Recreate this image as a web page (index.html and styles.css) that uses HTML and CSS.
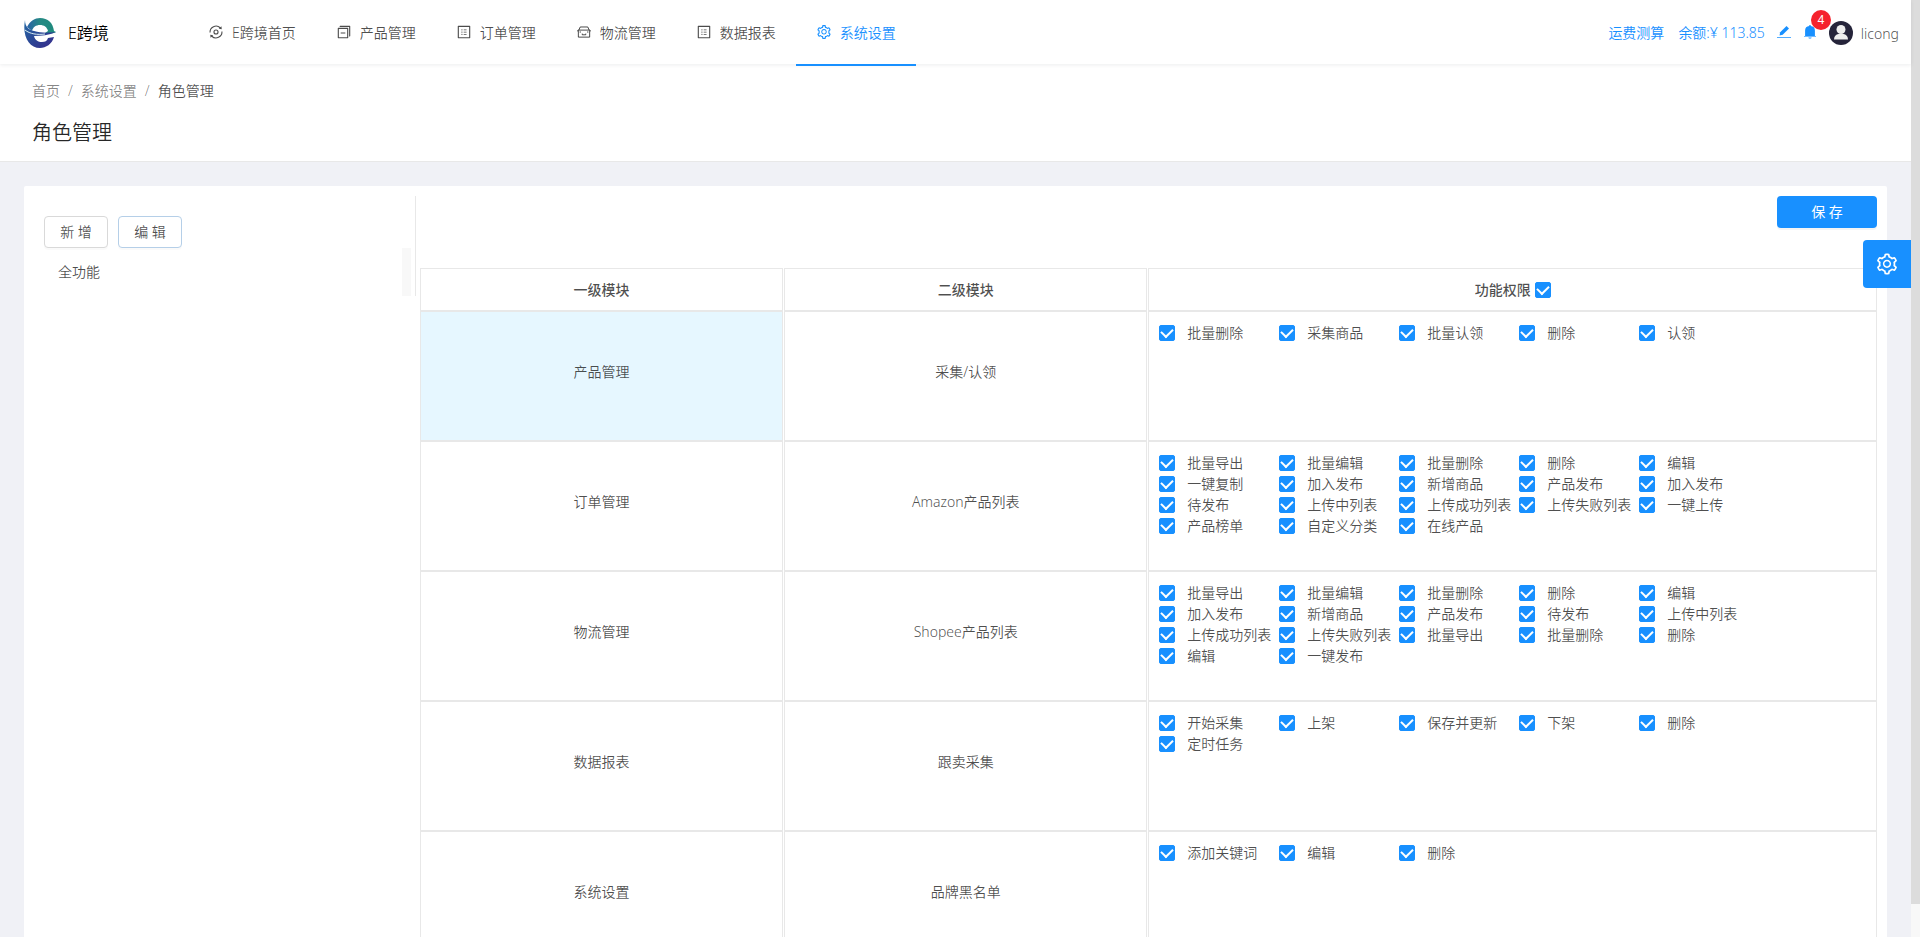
FILE: index.html
```html
<!DOCTYPE html>
<html lang="zh-CN">
<head>
<meta charset="utf-8">
<title>角色管理</title>
<link rel="stylesheet" href="styles.css">
</head>
<body>
<svg class="sprite" aria-hidden="true">
  <symbol id="i-setting" viewBox="0 0 1024 1024"><path d="M924.8 625.7l-65.5-56c3.1-19 4.7-38.4 4.7-57.8s-1.6-38.8-4.7-57.8l65.5-56a32.03 32.03 0 0 0 9.3-35.2l-.9-2.6a443.74 443.74 0 0 0-79.7-137.9l-1.8-2.1a32.12 32.12 0 0 0-35.1-9.5l-81.3 28.9c-30-24.6-63.5-44-99.7-57.6l-15.7-85a32.05 32.05 0 0 0-25.8-25.7l-2.7-.5c-52.1-9.4-106.9-9.4-159 0l-2.7.5a32.05 32.05 0 0 0-25.8 25.7l-15.8 85.4a351.86 351.86 0 0 0-99 57.4l-81.9-29.1a32 32 0 0 0-35.1 9.5l-1.8 2.1a446.02 446.02 0 0 0-79.7 137.9l-.9 2.6c-4.5 12.5-.8 26.5 9.3 35.2l66.3 56.6c-3.1 18.8-4.6 38-4.6 57.1 0 19.2 1.5 38.4 4.6 57.1L99 625.5a32.03 32.03 0 0 0-9.3 35.2l.9 2.6c18.1 50.4 44.9 96.9 79.7 137.9l1.8 2.1a32.12 32.12 0 0 0 35.1 9.5l81.9-29.1c29.8 24.5 63.1 43.9 99 57.4l15.8 85.4a32.05 32.05 0 0 0 25.8 25.7l2.7.5a449.4 449.4 0 0 0 159 0l2.7-.5a32.05 32.05 0 0 0 25.8-25.7l15.7-85a350 350 0 0 0 99.7-57.6l81.3 28.9a32 32 0 0 0 35.1-9.5l1.8-2.1c34.8-41.1 61.6-87.5 79.7-137.9l.9-2.6c4.5-12.3.8-26.3-9.3-35zM788.3 465.9c2.5 15.1 3.8 30.6 3.8 46.1s-1.3 31-3.8 46.1l-6.6 40.1 74.7 63.9a370.03 370.03 0 0 1-42.6 73.6L721 702.8l-31.4 25.8c-23.9 19.6-50.5 35-79.3 45.8l-38.1 14.3-17.9 97a377.5 377.5 0 0 1-85 0l-17.9-97.2-37.8-14.5c-28.5-10.8-55-26.2-78.7-45.7l-31.4-25.9-93.4 33.2c-17-22.9-31.2-47.6-42.6-73.6l75.5-64.5-6.5-40c-2.4-14.9-3.7-30.3-3.7-45.5 0-15.3 1.2-30.6 3.7-45.5l6.5-40-75.5-64.5c11.3-26.1 25.6-50.7 42.6-73.6l93.4 33.2 31.4-25.9c23.7-19.5 50.2-34.9 78.7-45.7l37.9-14.3 17.9-97.2c28.1-3.2 56.8-3.2 85 0l17.9 97 38.1 14.3c28.7 10.8 55.4 26.2 79.3 45.8l31.4 25.8 92.8-32.9c17 22.9 31.2 47.6 42.6 73.6L781.8 426l6.5 39.9zM512 326c-97.2 0-176 78.8-176 176s78.8 176 176 176 176-78.8 176-176-78.8-176-176-176zm79.2 255.2A111.6 111.6 0 0 1 512 614c-29.9 0-58-11.7-79.2-32.8A111.6 111.6 0 0 1 400 502c0-29.9 11.7-58 32.8-79.2C454 401.6 482.1 390 512 390c29.9 0 58 11.6 79.2 32.8A111.6 111.6 0 0 1 624 502c0 29.9-11.7 58-32.8 79.2z"/></symbol>
  <symbol id="i-switcher" viewBox="0 0 1024 1024"><path d="M752 240H144c-17.7 0-32 14.3-32 32v608c0 17.7 14.3 32 32 32h608c17.7 0 32-14.3 32-32V272c0-17.7-14.3-32-32-32zm-40 600H184V312h528v528zm168-728H264c-17.7 0-32 14.3-32 32v32c0 4.4 3.6 8 8 8h600v600c0 4.4 3.6 8 8 8h32c17.7 0 32-14.3 32-32V144c0-17.7-14.3-32-32-32zM300 612h296v-72H300z"/></symbol>
  <symbol id="i-profile" viewBox="0 0 1024 1024"><path d="M880 112H144c-17.7 0-32 14.3-32 32v736c0 17.7 14.3 32 32 32h736c17.700 0 32-14.3 32-32V144c0-17.700-14.3-32-32-32zm-40 728H184V184h656v656zM492 400h184v-56H492v56zm0 144h184v-56H492v56zm0 144h184v-56H492v56zM340 368a40 40 0 1 0 80 0 40 40 0 1 0-80 0zm0 144a40 40 0 1 0 80 0 40 40 0 1 0-80 0zm0 144a40 40 0 1 0 80 0 40 40 0 1 0-80 0z"/></symbol>
  <symbol id="i-car" viewBox="0 0 1024 1024"><g fill="none" stroke="currentColor" stroke-width="64" stroke-linejoin="round" stroke-linecap="round"><path d="M90 440l90-50 90-200h484l90 200 90 50M190 390h644M150 450v390h724V450M400 640v50h224v-50"/></g><path d="M230 480h90v64H230zM704 480h90v64H704z"/></symbol>
  <symbol id="i-home" viewBox="0 0 1024 1024"><g fill="none" stroke="currentColor" stroke-width="70"><circle cx="512" cy="512" r="130"/><path d="M130 540A385 385 0 0 1 780 240M894 484A385 385 0 0 1 244 784"/></g><path d="M690 300l190 40-20-200zM334 724l-190-40 20 200z"/></symbol>
  <symbol id="i-edit" viewBox="0 0 14 14"><path d="M2.500 10.500l.7-3.200L9.500 1l2.500 2.500-6.300 6.300z"/><path d="M0 12h14v1H0z" opacity=".75"/></symbol>
  <symbol id="i-bell" viewBox="0 0 14 14"><path d="M6.300 0h1.400v1a4.500 4.500 0 0 1 4.200 4.500V11H2.100V5.500A4.500 4.500 0 0 1 6.300 1z"/><path d="M1 11h12v1H1zM5.300 12.300h3.400a1.700 1.700 0 0 1-3.400 0z" opacity=".6"/></symbol>
</svg>
<div class="window">
<div class="page">
  <header class="topbar">
    <a class="brand" href="#">
      <svg class="logo" viewBox="0 -1 32 32" role="img" aria-label="E跨境">
        <defs>
          <linearGradient id="g1" x1="0" y1="0" x2="1" y2="0"><stop offset="0" stop-color="#2b62a8"/><stop offset=".45" stop-color="#258a84"/><stop offset="1" stop-color="#1e8a7c"/></linearGradient>
          <linearGradient id="g2" x1="0" y1="0" x2="1" y2="1"><stop offset="0" stop-color="#256aa6"/><stop offset=".6" stop-color="#2d3f92"/><stop offset="1" stop-color="#3a2d8c"/></linearGradient>
        </defs>
        <path fill="url(#g1)" d="M3 9C6 3 11 0 16 0c8 0 13 5 14 13l2 1c-3 2-8 2-11 1l3-2c-1-4-4-6-8-6s-7 2-8 6z"/>
        <path fill="url(#g2)" d="M1 2c0 7 4 10 9 11 7 2 13 2 22 1-7 3-15 4-22 4 1 4 4 6 8 6 3 0 5-1 6-4l6-1c-2 7-8 11-14 11C5 30-2 18 1 2z"/>
        <path fill="none" stroke="#d9eef2" stroke-width="1" d="M1 12c5 4 12 5 20 4"/>
      </svg>
      <span>E跨境</span>
    </a>
    <nav class="menu">
      <a href="#"><svg class="icon"><use href="#i-home"/></svg>E跨境首页</a>
      <a href="#"><svg class="icon"><use href="#i-switcher"/></svg>产品管理</a>
      <a href="#"><svg class="icon"><use href="#i-profile"/></svg>订单管理</a>
      <a href="#"><svg class="icon"><use href="#i-car"/></svg>物流管理</a>
      <a href="#"><svg class="icon"><use href="#i-profile"/></svg>数据报表</a>
      <a href="#" class="active"><svg class="icon"><use href="#i-setting"/></svg>系统设置</a>
    </nav>
    <div class="tools">
      <a href="#">运费测算</a>
      <a href="#" class="balance">余额:¥ 113.85</a>
      <a href="#" aria-label="编辑"><svg class="icon"><use href="#i-edit"/></svg></a>
      <a href="#" class="bell" aria-label="通知"><svg class="icon"><use href="#i-bell"/></svg><span class="badge">4</span></a>
      <a href="#" class="user">
        <svg class="avatar" viewBox="0 0 24 24"><circle cx="12" cy="12" r="12" fill="#25243a"/><circle cx="12" cy="8.500" r="4.500" fill="#eee"/><path fill="#eee" d="M5 18.500c0-3.500 2-5 4.500-5.500h5c2.500.5 4.500 2 4.500 5.500z"/></svg>
        <span>licong</span>
      </a>
    </div>
  </header>
  <div class="page-head">
    <nav class="crumbs"><a href="#">首页</a><i>/</i><a href="#">系统设置</a><i>/</i><span>角色管理</span></nav>
    <h1>角色管理</h1>
  </div>
  <main class="card">
    <aside class="roles">
      <div class="actions"><button type="button">新 增</button><button type="button" class="focused">编 辑</button></div>
      <div class="role-list"><a href="#">全功能</a><div class="mini-track"></div></div>
    </aside>
    <section class="perms">
      <div class="save-row"><button type="button" class="primary">保 存</button></div>
      <table>
        <colgroup><col class="c1"><col class="c2"><col class="c3"></colgroup>
        <thead><tr><th>一级模块</th><th>二级模块</th><th><label class="all">功能权限<input type="checkbox" checked></label></th></tr></thead>
        <tbody>
        <tr><td class="selected">产品管理</td><td>采集/认领</td><td><div class="opts">
          <label><input type="checkbox" checked>批量删除</label><label><input type="checkbox" checked>采集商品</label><label><input type="checkbox" checked>批量认领</label><label><input type="checkbox" checked>删除</label><label><input type="checkbox" checked>认领</label>
        </div></td></tr>
        <tr><td>订单管理</td><td>Amazon产品列表</td><td><div class="opts">
          <label><input type="checkbox" checked>批量导出</label><label><input type="checkbox" checked>批量编辑</label><label><input type="checkbox" checked>批量删除</label><label><input type="checkbox" checked>删除</label><label><input type="checkbox" checked>编辑</label>
          <label><input type="checkbox" checked>一键复制</label><label><input type="checkbox" checked>加入发布</label><label><input type="checkbox" checked>新增商品</label><label><input type="checkbox" checked>产品发布</label><label><input type="checkbox" checked>加入发布</label>
          <label><input type="checkbox" checked>待发布</label><label><input type="checkbox" checked>上传中列表</label><label><input type="checkbox" checked>上传成功列表</label><label><input type="checkbox" checked>上传失败列表</label><label><input type="checkbox" checked>一键上传</label>
          <label><input type="checkbox" checked>产品榜单</label><label><input type="checkbox" checked>自定义分类</label><label><input type="checkbox" checked>在线产品</label>
        </div></td></tr>
        <tr><td>物流管理</td><td>Shopee产品列表</td><td><div class="opts">
          <label><input type="checkbox" checked>批量导出</label><label><input type="checkbox" checked>批量编辑</label><label><input type="checkbox" checked>批量删除</label><label><input type="checkbox" checked>删除</label><label><input type="checkbox" checked>编辑</label>
          <label><input type="checkbox" checked>加入发布</label><label><input type="checkbox" checked>新增商品</label><label><input type="checkbox" checked>产品发布</label><label><input type="checkbox" checked>待发布</label><label><input type="checkbox" checked>上传中列表</label>
          <label><input type="checkbox" checked>上传成功列表</label><label><input type="checkbox" checked>上传失败列表</label><label><input type="checkbox" checked>批量导出</label><label><input type="checkbox" checked>批量删除</label><label><input type="checkbox" checked>删除</label>
          <label><input type="checkbox" checked>编辑</label><label><input type="checkbox" checked>一键发布</label>
        </div></td></tr>
        <tr><td>数据报表</td><td>跟卖采集</td><td><div class="opts">
          <label><input type="checkbox" checked>开始采集</label><label><input type="checkbox" checked>上架</label><label><input type="checkbox" checked>保存并更新</label><label><input type="checkbox" checked>下架</label><label><input type="checkbox" checked>删除</label>
          <label><input type="checkbox" checked>定时任务</label>
        </div></td></tr>
        <tr><td>系统设置</td><td>品牌黑名单</td><td><div class="opts">
          <label><input type="checkbox" checked>添加关键词</label><label><input type="checkbox" checked>编辑</label><label><input type="checkbox" checked>删除</label>
        </div></td></tr>
        </tbody>
      </table>
    </section>
  </main>
  <button type="button" class="drawer" aria-label="设置"><svg><use href="#i-setting"/></svg></button>
</div>
<div class="track"><div class="thumb"></div></div>
</div>
</body>
</html>
```
FILE: styles.css
```css
* { box-sizing: border-box; }
body {
  margin: 0;
  font: 350 14px/21px "Noto Sans", "Noto Sans CJK SC", sans-serif;
  color: rgba(0, 0, 0, .7);
  background: #f0f1f6;
}
a { color: inherit; text-decoration: none; }
button { font: inherit; cursor: pointer; }
.sprite { position: absolute; width: 0; height: 0; }
.icon { width: 14px; height: 14px; fill: currentColor; flex: none; }

.window { display: flex; height: 100vh; overflow: hidden; }
.page { flex: 1; min-width: 0; position: relative; }
.track { width: 9px; background: #f8f8f8; }
.thumb { height: 96.5%; background: #dcdcdc; }

.topbar {
  position: relative;
  z-index: 1;
  display: flex;
  height: 64px;
  padding: 0 12px 0 24px;
  background: #fff;
  box-shadow: 0 1px 4px rgba(0, 21, 41, .08);
}
.brand { display: flex; align-items: center; gap: 12px; width: 164px; padding-top: 2px; color: #000; font-size: 16px; }
.logo { width: 32px; height: 32px; }
.menu { display: flex; flex: 1; }
.menu a { display: flex; align-items: center; gap: 8px; height: 66px; padding: 0 20px; border-bottom: 2px solid transparent; }
.menu .icon { width: 16px; height: 16px; }
.menu .active { color: #1890ff; border-color: #1890ff; }
.tools { display: flex; align-items: center; gap: 12px; color: #1890ff; }
.tools a { display: flex; align-items: center; }
.tools .balance { margin-left: 2px; }
.bell { position: relative; }
.badge {
  position: absolute;
  left: 8px;
  top: -15px;
  width: 20px;
  height: 20px;
  border-radius: 10px;
  background: #f5222d;
  color: #fff;
  font-size: 12px;
  font-weight: 400;
  line-height: 20px;
  text-align: center;
}
.tools .user { gap: 8px; padding-top: 2px; color: rgba(0, 0, 0, .7); }
.avatar { width: 24px; height: 24px; }

.page-head { padding: 16px 32px 0; height: 98px; background: #fff; border-bottom: 1px solid #e8e8e8; }
.crumbs { display: flex; gap: 8px; color: rgba(0, 0, 0, .48); }
.crumbs span { color: rgba(0, 0, 0, .7); }
.crumbs i { font-style: normal; }
h1 { margin: 18px 0 0; font-size: 20px; line-height: 28px; font-weight: 350; color: rgba(0, 0, 0, .85); }

.card { display: flex; margin: 24px 24px 0; padding: 10px; background: #fff; border-radius: 2px; }
.roles { flex: none; width: 382px; height: 100px; padding: 20px 4px 0 10px; border-right: 1px solid #e8e8e8; }
.actions { display: flex; gap: 10px; }
.actions button { width: 64px; height: 32px; padding: 0 0 2px; background: #fff; color: inherit; border: 1px solid #d9d9d9; border-radius: 4px; box-shadow: 0 2px 0 rgba(0, 0, 0, .02); }
.actions .focused { border-color: #b5cfe8; }
.role-list { display: flex; justify-content: space-between; height: 48px; }
.role-list a { padding: 13px 14px; }
.mini-track { width: 9px; background: #f8f8f8; }

.perms { flex: 1; min-width: 0; padding-left: 4px; }
.save-row { display: flex; justify-content: flex-end; height: 72px; }
.primary { width: 100px; height: 32px; padding: 0 0 2px; border: 0; border-radius: 4px; background: #1890ff; color: #fff; font-weight: 400; box-shadow: 0 2px 0 rgba(0, 0, 0, .04); }
table { width: calc(100% + 2px); margin: 0 -1px; table-layout: fixed; border-collapse: separate; border-spacing: 1px 0; }
.c1, .c2 { width: 24.96%; }
th, td { border: 1px solid #e8e8e8; padding: 0; text-align: center; }
th { height: 43px; font-weight: 500; }
td { height: 130px; padding-bottom: 10px; }
.selected { background: #e6f7ff; }
td:last-child { padding: 10px; vertical-align: top; }
.all { display: inline-flex; align-items: center; gap: 4px; }
.opts { display: flex; flex-wrap: wrap; max-width: 600px; }
.opts label { display: flex; align-items: center; gap: 12px; width: 120px; white-space: nowrap; }
input { appearance: none; display: flex; align-items: center; justify-content: center; flex: none; width: 16px; height: 16px; margin: 0; border-radius: 2px; border: 1px solid #d9d9d9; }
input:checked { background: #1890ff; border-color: #1890ff; }
input:checked::after { content: ""; width: 6px; height: 9px; margin-bottom: 2px; border: solid #fff; border-width: 0 2px 2px 0; transform: rotate(45deg); }

.drawer { position: absolute; right: 0; top: 240px; z-index: 2; display: flex; align-items: center; justify-content: center; width: 48px; height: 48px; padding: 0; border: 0; border-radius: 4px 0 0 4px; background: #1890ff; color: #fff; }
.drawer svg { width: 24px; height: 24px; fill: currentColor; }
```
